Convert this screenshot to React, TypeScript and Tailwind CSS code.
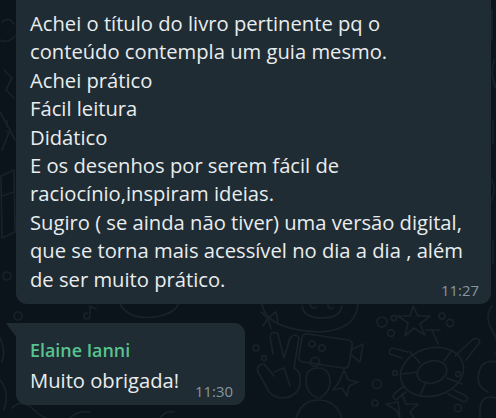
import React from 'react';

// WhatsApp dark chat: one long received message and a short reply

const lines = [
  'Achei o título do livro pertinente pq o',
  'conteúdo contempla um guia mesmo.',
  'Achei prático',
  'Fácil leitura',
  'Didático',
  'E os desenhos por serem fácil de',
  'raciocínio,inspiram ideias.',
  'Sugiro ( se ainda não tiver) uma versão digital,',
  'que se torna mais acessível no dia a dia , além',
  'de ser muito prático.',
];

// Faint doodle wallpaper behind the chat
const Wallpaper = () => (
  <svg
    className="absolute inset-0"
    width="496"
    height="418"
    viewBox="0 0 496 418"
    fill="none"
    stroke="#18222a"
    strokeWidth="1.7"
    strokeLinecap="round"
    strokeLinejoin="round"
  >
    {/* left strip */}
    <path d="M2 22 Q9 16 14 24 M0 40 Q8 44 15 36" />
    <path d="M4 70 L12 78 L6 90 L14 98" />
    <path d="M0 112 L10 130 L2 150 M10 130 L15 140" />
    <path d="M7 121 v6 M7 131 v1" />
    <path d="M1 176 L14 170 L15 232 L2 238 Z M2 196 L14 192" />
    <path d="M3 276 a4 4 0 1 0 8 0 a4 4 0 1 0 -8 0" />
    {/* bottom left */}
    <path d="M14 316 a4 4 0 1 0 8 0 a4 4 0 1 0 -8 0" />
    <path d="M0 338 Q6 350 2 362 M0 380 Q10 392 4 410 M12 408 Q22 398 34 410 Q40 416 46 418" />
    <path d="M90 306 v10 a3 3 0 1 1 -3 -3 M90 306 l6 3" />
    <path d="M120 304 Q130 322 160 316 Q176 312 178 304" />
    <path d="M70 418 Q78 410 90 412 M160 418 q6 -8 14 -6" />
    {/* cake at top */}
    <path d="M262 304 Q266 330 320 332 Q356 330 358 304" />
    <path d="M302 306 Q304 318 322 318 Q340 318 342 306" />
    <path d="M310 304 q2 6 6 3 M328 304 q0 6 5 4" />
    <path d="M261 312 l7 6 l-5 8 M268 318 l8 -6 l2 10 M268 318 l3 11" />
    {/* star and dots */}
    <path d="M413 306 L418 316 L430 316 L420 324 L425 335 L414 328 L405 336 L408 323 L398 316 L410 316 Z" />
    <circle cx="382" cy="322" r="5" />
    <circle cx="394" cy="318" r="2.6" />
    <circle cx="391" cy="333" r="3.4" />
    <circle cx="442" cy="316" r="3" />
    <circle cx="450" cy="323" r="3.6" />
    <circle cx="256" cy="348" r="3" />
    <circle cx="264" cy="358" r="2.4" />
    <circle cx="322" cy="348" r="3.2" />
    <circle cx="315" cy="362" r="4.5" />
    <circle cx="375" cy="403" r="3" />
    <circle cx="377" cy="384" r="4.5" />
    <circle cx="395" cy="373" r="2.4" />
    <circle cx="458" cy="374" r="2.4" />
    <circle cx="458" cy="408" r="3.6" />
    {/* camera */}
    <path d="M348 340 l-40 -6 q-5 -1 -6 4 l-3 18 q-1 5 4 6 l40 6 q5 1 6 -4 l3 -18 q1 -5 -4 -6 Z" />
    <path d="M351 350 l12 -6 l-3 18 l-10 -8" />
    <circle cx="312" cy="344" r="3" />
    {/* turtle */}
    <ellipse cx="432" cy="372" rx="32" ry="24" transform="rotate(-15 432 372)" />
    <ellipse cx="432" cy="372" rx="15" ry="11" transform="rotate(-15 432 372)" />
    <path d="M420 363 L410 352 M444 361 L452 350 M447 378 L462 384 M426 382 L420 396 M418 372 L402 374" />
    <path d="M455 356 L472 340 q6 -4 8 2 L466 360 M454 390 l12 6 q4 4 -2 6 L448 394 M406 392 l-10 8 q-4 -2 -2 -6 L404 386 M402 358 l-12 -4 q-2 -4 2 -6 L408 352" />
    <path d="M438 344 L432 330 M426 330 L440 330" />
    {/* peace hand */}
    <path d="M273 354 L270 336 q2 -6 8 -2 L284 358 L290 338 q6 -6 9 0 L294 368 q8 4 6 16 q-2 12 -16 14 q-14 0 -18 -12 L258 372 q-2 -8 6 -8 L274 376" />
    <path d="M274 372 L284 368 L290 386" />
    {/* sparkle */}
    <path d="M344 370 L348 380 L358 382 L349 386 L347 396 L342 388 L333 390 L339 382 Z" />
    {/* person */}
    <path d="M318 398 q-12 -4 -12 -18 q0 -12 12 -12 q12 0 12 14 q0 10 -10 16" />
    <path d="M296 418 q6 -18 22 -18 q18 0 24 18" />
    {/* star bottom */}
    <path d="M402 394 L406 404 L418 404 L410 412 L414 418 M400 418 L396 410 L386 404 L398 402 Z" />
    {/* right edge */}
    <path d="M492 306 q-8 10 0 24 q8 12 4 24 M496 362 q-16 -4 -18 16 q0 10 10 14 M496 398 q-14 -4 -16 10 L480 418" />
    <path d="M492 10 v30 M494 60 q-4 16 2 28 M493 120 v24 M492 180 q4 10 0 20 M493 240 v24" />
  </svg>
);

export default function App() {
  return (
    <div
      className="relative h-[418px] w-[496px] overflow-hidden bg-[#0b141a] text-[#e9edef]"
      style={{ fontFamily: '"Open Sans", "Noto Sans", sans-serif' }}
    >
      <Wallpaper />

      <div className="relative flex flex-col">
        {/* long message, top cut off by the window */}
        <div className="-mt-[12px] ml-[16px] w-[475px] rounded-[11px] bg-[#202c33] pb-[4px] pl-[14px] pr-[12px] pt-[21px]">
          <div className="flex items-end">
            <div className="min-w-0 flex-1 pb-[7px] text-[20.2px] leading-[28.4px]">
              {lines.map((l) => (
                <div key={l} className="whitespace-nowrap">
                  {l}
                </div>
              ))}
            </div>
            <span className="shrink-0 text-[14.9px] leading-[20px] text-[#8696a0]">11:27</span>
          </div>
        </div>

        {/* reply with tail */}
        <div className="relative ml-[16px] mt-[19px] w-[229px] rounded-[11px] rounded-tl-none bg-[#202c33] pb-[4px] pl-[14px] pr-[12px] pt-[14px]">
          <svg className="absolute left-[-10px] top-0" width="10" height="14" viewBox="0 0 10 14">
            <path d="M10 0 H1.6 Q-0.4 0 0.8 1.6 L10 13.5 Z" fill="#202c33" />
          </svg>
          <div className="text-[17.9px] font-semibold leading-[26px] text-[#57c38f]">Elaine Ianni</div>
          <div className="mt-[3px] flex items-end justify-between">
            <span className="pb-[7px] text-[20.2px] leading-[28.4px]">Muito obrigada!</span>
            <span className="text-[14.9px] leading-[20px] text-[#8696a0]">11:30</span>
          </div>
        </div>
      </div>
    </div>
  );
}
